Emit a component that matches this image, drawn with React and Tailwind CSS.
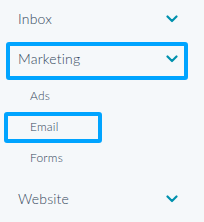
function Chevron() {
  return (
    <svg width="12" height="8" viewBox="0 0 12 8" fill="none" className="shrink-0">
      <path d="M1.5 1.5 L6 6 L10.5 1.5" stroke="#0091ae" strokeWidth="2.2" strokeLinecap="round" strokeLinejoin="round" />
    </svg>
  )
}

function TopItem({ label, active, className = '' }) {
  return (
    <div
      className={`ml-[6px] w-[182px] h-[38px] border-4 rounded-[3px] flex items-center justify-between pl-[8px] pr-[6px] pb-[5px] ${active ? 'border-[#00a4ff]' : 'border-transparent'} ${className}`}
    >
      <span className="text-[14px] font-light tracking-[0.2px] text-[#33475b]">{label}</span>
      <Chevron />
    </div>
  )
}

function SubItem({ label, active, h = 'h-[31px]' }) {
  return (
    <div
      className={`ml-[4px] w-[98px] ${h} border-4 rounded-[3px] flex items-center pl-[22px] pb-[1px] ${active ? 'border-[#00a4ff]' : 'border-transparent'}`}
    >
      <span className="text-[12px] font-light tracking-[0.2px] text-[#33475b]">{label}</span>
    </div>
  )
}

export default function App() {
  return (
    <div className="w-[204px] h-[222px] bg-[#f5f8fa] pt-[2px] overflow-hidden" style={{ fontFamily: 'Lato, "Noto Sans", sans-serif' }}>
      <TopItem label="Inbox" />
      <TopItem label="Marketing" active className="mt-[2px]" />
      <SubItem label="Ads" h="h-[32px]" />
      <SubItem label="Email" active />
      <SubItem label="Forms" />
      <TopItem label="Website" className="mt-[8px]" />
    </div>
  )
}
